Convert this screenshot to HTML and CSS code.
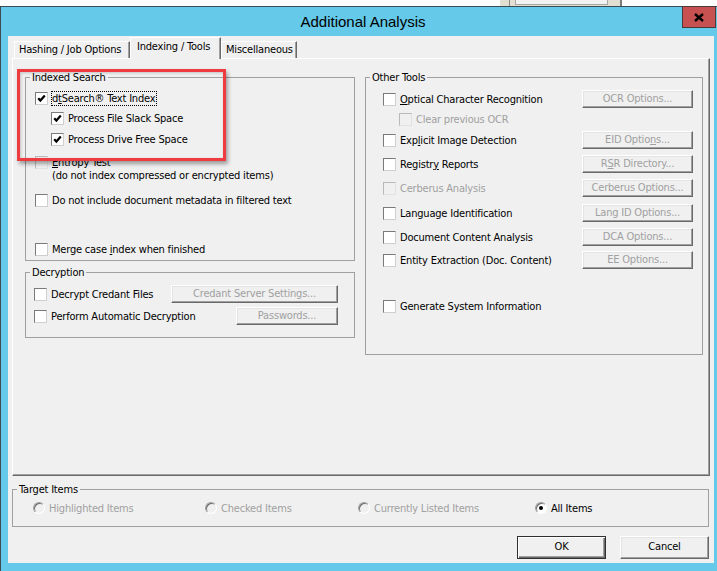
FILE: index.html
```html
<!DOCTYPE html>
<html>
<head>
<meta charset="utf-8">
<title>Additional Analysis</title>
<link rel="stylesheet" href="styles.css">
</head>
<body>
<div class="behind">
  <div class="behind-win"><div class="behind-line"></div><div class="behind-btn"></div></div>
</div>
<div class="window">
  <div class="titlebar">
    <div class="title">Additional Analysis</div>
    <div class="close"><svg width="10" height="9" viewBox="0 0 10 9"><path d="M1 1 L9 8 M9 1 L1 8" stroke="#000" stroke-width="2.4" fill="none"/></svg></div>
  </div>
  <div class="client">
    <div class="tabs">
      <div class="tab tab-hash">Hashing / Job Options</div>
      <div class="tab tab-sel">Indexing / Tools</div>
      <div class="tab tab-misc">Miscellaneous</div>
    </div>
    <div class="panel">
      <div class="col-left">
        <fieldset class="group">
          <legend>Indexed Search</legend>
          <div class="ix-body">
            <div class="row"><span class="cb"><svg width="11" height="11" viewBox="0 0 11 11"><polyline points="2.2,5.2 4.4,7.6 8.8,2.6" stroke="#000" stroke-width="2.2" fill="none"/></svg></span><span class="focus">d<u>t</u>Search® Text Index</span></div>
            <div class="row sub m7"><span class="cb"><svg width="11" height="11" viewBox="0 0 11 11"><polyline points="2.2,5.2 4.4,7.6 8.8,2.6" stroke="#000" stroke-width="2.2" fill="none"/></svg></span><span>Process File Slack Space</span></div>
            <div class="row sub m8"><span class="cb"><svg width="11" height="11" viewBox="0 0 11 11"><polyline points="2.2,5.2 4.4,7.6 8.8,2.6" stroke="#000" stroke-width="2.2" fill="none"/></svg></span><span>Process Drive Free Space</span></div>
            <div class="row two m10"><span class="cb dis"></span><span class="lbl2"><u>E</u>ntropy Test<br>(do not index compressed or encrypted items)</span></div>
            <div class="row m12"><span class="cb"></span><span>Do not include document metadata in filtered text</span></div>
            <div class="row m36"><span class="cb"></span><span>Merge case <u>i</u>ndex when finished</span></div>
          </div>
        </fieldset>
        <fieldset class="group">
          <legend>Decryption</legend>
          <div class="dc-body">
            <div class="brow"><span class="cb"></span><span>Decrypt Credant Files</span><span class="btn w167">Credant Server Settings...</span></div>
            <div class="brow"><span class="cb"></span><span>Perform Automatic Decryption</span><span class="btn w102">Passwords...</span></div>
          </div>
        </fieldset>
      </div>
      <div class="col-right">
        <fieldset class="group">
          <legend>Other Tools</legend>
          <div class="ot-body">
            <div class="brow"><span class="cb"></span><span><u>O</u>ptical Character Recognition</span><span class="btn w111">OCR Options...</span></div>
            <div class="brow sub g2"><span class="cb dis"></span><span class="gray">Clear previous OCR</span></div>
            <div class="brow g3"><span class="cb"></span><span>Exp<u>l</u>icit Image Detection</span><span class="btn w111">EID Optio<u>n</u>s...</span></div>
            <div class="brow g6"><span class="cb"></span><span>Registr<u>y</u> Reports</span><span class="btn w111">R<u>S</u>R Directory...</span></div>
            <div class="brow g6"><span class="cb dis"></span><span class="gray">Cerberus Analysis</span><span class="btn w111">Cerberus Options...</span></div>
            <div class="brow g7"><span class="cb"></span><span>Language Identification</span><span class="btn w111">Lang ID Options...</span></div>
            <div class="brow g6"><span class="cb"></span><span>Document Content Analysis</span><span class="btn w111">DCA Options...</span></div>
            <div class="brow g5"><span class="cb"></span><span>Entity Extraction (Doc. Content)</span><span class="btn w111">EE Options...</span></div>
            <div class="brow g28"><span class="cb"></span><span>Generate System Information</span></div>
          </div>
        </fieldset>
      </div>
      <div class="highlight"></div>
    </div>
    <fieldset class="group target">
      <legend>Target Items</legend>
      <div class="tg-body">
        <div class="ritem r1"><span class="rd"></span><span class="gray">Highlighted Items</span></div>
        <div class="ritem r2"><span class="rd"></span><span class="gray">Checked Items</span></div>
        <div class="ritem r3"><span class="rd"></span><span class="gray">Currently Listed Items</span></div>
        <div class="ritem"><span class="rd on"></span><span>All Items</span></div>
      </div>
    </fieldset>
    <div class="actions">
      <div class="pb default">OK</div>
      <div class="pb">Cancel</div>
    </div>
  </div>
</div>
</body>
</html>
```
FILE: styles.css
```css
* { box-sizing: border-box; }
html, body { margin: 0; padding: 0; }
body {
  width: 717px;
  height: 571px;
  overflow: hidden;
  background: #fff;
  font-family: "DejaVu Sans Condensed", "Liberation Sans", Arial, sans-serif;
  font-size: 11px;
  letter-spacing: -0.2px;
  color: #000;
}
u { text-decoration: underline; text-underline-offset: 1px; }

/* window behind */
.behind { height: 6px; display: flex; padding-left: 500px; }
.behind-win {
  width: 122px; height: 6px; background: #e2dfd2;
  display: flex; padding-left: 9px; border-right: 2px solid #7b7b7b;
}
.behind-line { width: 1px; background: #8a8a8a; }
.behind-btn {
  width: 93px; margin-left: 5px; height: 5px;
  background: #f2f2f2; border: 1px solid #a8a8a8; border-top: 0;
}

/* window frame */
.window {
  height: 565px;
  background: #65c9e9;
  border-top: 1px solid #3d4b52;
  border-left: 1px solid #3d4b52;
  padding: 0 3px 8px 7px;
  display: flex;
  flex-direction: column;
}
.titlebar {
  height: 29px;
  flex: none;
  display: grid;
  grid-template-columns: 1fr auto 1fr;
  align-items: start;
}
.title {
  grid-column: 2;
  font-family: "Liberation Sans", Arial, sans-serif;
  font-size: 15px;
  letter-spacing: 0;
  line-height: 29px;
  padding-left: 4px;
  color: #000;
}
.close {
  grid-column: 3;
  justify-self: end;
  width: 34px;
  height: 22px;
  margin-top: -1px;
  margin-right: -2px;
  background: #c75050;
  border: 1px solid #4a3a3a;
  display: flex;
  align-items: center;
  justify-content: center;
}

.client {
  flex: 1;
  background: #f0f0f0;
  padding: 0 4px;
  display: flex;
  flex-direction: column;
}

/* tabs */
.tabs {
  height: 22px;
  flex: none;
  display: flex;
  align-items: flex-end;
  padding-left: 2px;
}
.tab {
  height: 17px;
  border-top: 1px solid #fff;
  border-left: 1px solid #fff;
  border-right: 1px solid #696969;
  box-shadow: inset -1px 0 0 #a0a0a0;
  padding: 1px 0 0 4px;
  line-height: 13px;
  white-space: nowrap;
  background: #f0f0f0;
  overflow: hidden;
}
.tab-hash { width: 116px; }
.tab-misc { width: 76px; }
.tab-sel {
  width: 91px;
  height: 22px;
  margin-bottom: -1px;
  padding: 2px 0 0 6px;
  position: relative;
  z-index: 2;
}

/* panel */
.panel {
  position: relative;
  flex: none;
  width: 698px;
  height: 418px;
  border-top: 1px solid #fff;
  border-left: 1px solid #fff;
  border-right: 1px solid #696969;
  border-bottom: 1px solid #696969;
  box-shadow: inset -1px -1px 0 #a0a0a0;
  padding: 12px 6px 0 12px;
  display: flex;
  gap: 10px;
  align-items: flex-start;
}
.col-left { width: 330px; display: flex; flex-direction: column; gap: 5px; }
.col-right { width: 338px; }

.group {
  margin: 0;
  padding: 0;
  border: 1px solid #a0a0a0;
  min-width: 0;
}
.group legend {
  margin-left: 4px;
  padding: 0 2px;
  line-height: 13px;
  font-size: 11px;
}

/* rows */
.row { display: flex; align-items: center; height: 13px; line-height: 13px; white-space: nowrap; }
.row.two { height: 26px; align-items: flex-start; }
.lbl2 { line-height: 13px; }
.sub { padding-left: 16px; }
.m7 { margin-top: 7px; }
.m8 { margin-top: 8px; }
.m10 { margin-top: 10px; }
.m12 { margin-top: 12px; }
.m36 { margin-top: 36px; }

.cb {
  width: 13px;
  height: 13px;
  flex: none;
  border: 1px solid;
  border-color: #7a7a7a #cfcfcf #cfcfcf #7a7a7a;
  background: #fff;
  margin-right: 4px;
  display: flex;
  align-items: center;
  justify-content: center;
}
.cb.dis { border-color: #b9b9b9 #e2e2e2 #e2e2e2 #b9b9b9; background: #f0f0f0; }
.focus { border: 1px dotted #000; margin-left: -1px; padding-right: 1px; line-height: 13px; }
.gray { color: #a0a0a0; }

.ix-body { padding: 8px 0 4px 9px; }
.dc-body { padding: 6px 16px 12px 8px; display: flex; flex-direction: column; gap: 4px; }
.ot-body { padding: 6px 9px 39px 17px; }

.brow { display: flex; align-items: center; height: 18px; white-space: nowrap; }
.g2 { margin-top: 2px; }
.g3 { margin-top: 3px; }
.g5 { margin-top: 5px; }
.g6 { margin-top: 6px; }
.g7 { margin-top: 7px; }
.g28 { margin-top: 28px; }

.btn {
  margin-left: auto;
  flex: none;
  height: 18px;
  border: 1px solid;
  border-color: #fff #696969 #696969 #fff;
  box-shadow: inset -1px -1px 0 #a0a0a0, inset 1px 1px 0 #e3e3e3;
  background: #f0f0f0;
  color: #a0a0a0;
  text-align: center;
  line-height: 15px;
  white-space: nowrap;
}
.w167 { width: 167px; }
.w102 { width: 102px; }
.w111 { width: 111px; }

/* red highlight overlay */
.highlight {
  position: absolute;
  left: 4px;
  top: 10px;
  width: 209px;
  height: 92px;
  border: 3px solid #ee3b40;
  box-shadow: 2px 3px 4px rgba(0, 0, 0, 0.35), inset 1px 1px 3px rgba(0, 0, 0, 0.2);
  pointer-events: none;
}

/* target items */
.target { width: 697px; margin-top: 7px; flex: none; }
.tg-body { padding: 5px 0 11px 20px; display: flex; height: 30px; align-items: center; }
.ritem { display: flex; align-items: center; height: 14px; white-space: nowrap; }
.r1 { width: 172px; }
.r2 { width: 153px; }
.r3 { width: 177px; }
.rd {
  width: 12px;
  height: 12px;
  flex: none;
  border-radius: 50%;
  border: 1px solid;
  border-color: #a0a0a0 #fff #fff #a0a0a0;
  box-shadow: inset 1px 1px 0 #6d6d6d;
  background: #f0f0f0;
  margin-right: 4px;
  display: flex;
  align-items: center;
  justify-content: center;
}
.rd.on { background: #fff; }
.rd.on::after {
  content: "";
  width: 4px;
  height: 4px;
  border-radius: 50%;
  background: #000;
}

/* dialog buttons */
.actions {
  display: flex;
  justify-content: flex-end;
  gap: 14px;
  margin-top: 9px;
  padding-right: 1px;
}
.pb {
  width: 89px;
  height: 23px;
  border: 1px solid;
  border-color: #fff #696969 #696969 #fff;
  box-shadow: inset -1px -1px 0 #a0a0a0, inset 1px 1px 0 #e3e3e3;
  background: #f0f0f0;
  text-align: center;
  line-height: 20px;
}
.pb.default {
  border: 1px solid #303030;
  box-shadow: inset 1px 1px 0 #fff, inset -1px -1px 0 #696969, inset -2px -2px 0 #a0a0a0;
}
```
